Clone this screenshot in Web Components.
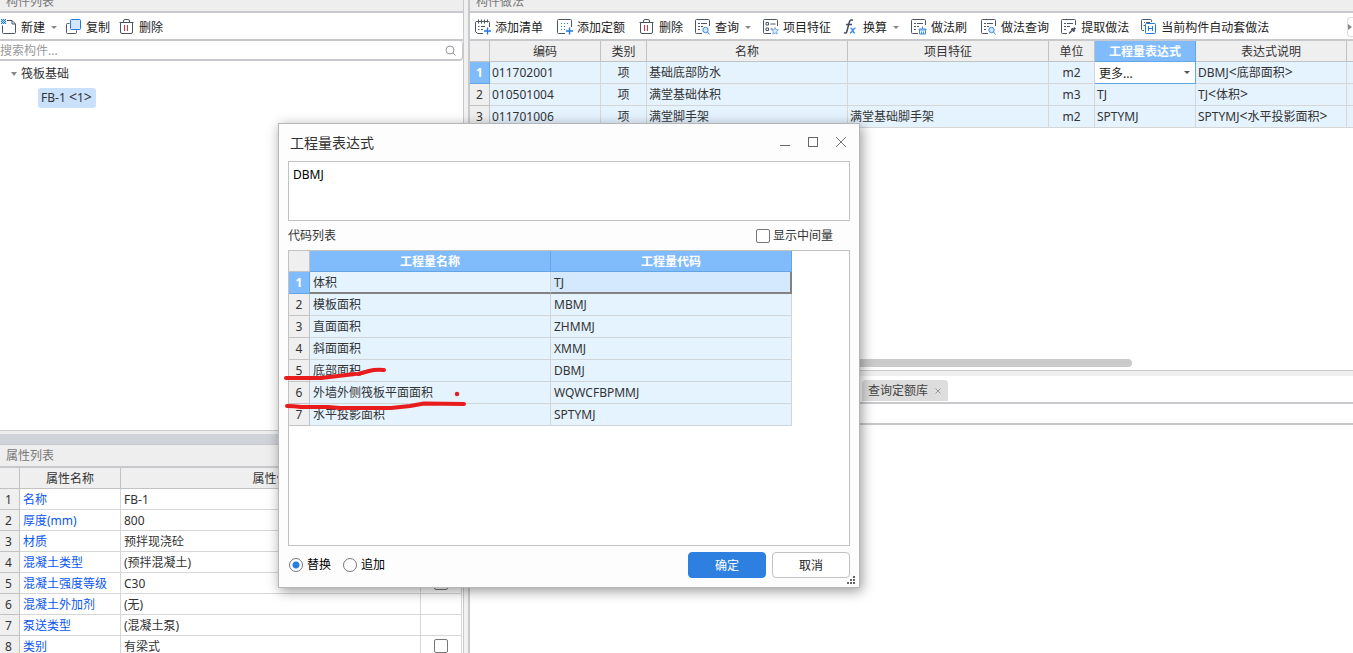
<!DOCTYPE html>
<html lang="zh-CN">
<head>
<meta charset="utf-8">
<title>构件做法</title>
<style>
  html, body { height: 100%; }
  body {
    margin: 0; overflow: hidden; background: #fff; color: #333;
    font: 12px/16px "Noto Sans", "Noto Sans CJK SC", sans-serif;
    --line: #c8c9cc; --grid: #d6d6d6; --bar: #efefef; --blue: #80bbfb; --blue-line: #64a5e8; --cell: #e5f3ff;
  }
</style>
</head>
<body>
<app-shell></app-shell>
<script>
const G = '#4c5564', B = '#1f7ae0';
const ICONS = {
  'new': `<path d="M6 1.500h5l3.500 3.500v8.500a1 1 0 0 1-1 1h-11a1 1 0 0 1-1-1V6.500M11 1.500V5h3.500" stroke="${G}"/><path d="M0 0h5v5H0z" fill="#b9d7f8"/><path d="M0 0h1v1H0zM2 0h1v1H2zM4 0h1v1H4zM1 1h1v1H1zM3 1h1v1H3zM0 2h1v1H0zM2 2h1v1H2zM4 2h1v1H4zM1 3h1v1H1zM3 3h1v1H3zM0 4h1v1H0zM2 4h1v1H2zM4 4h1v1H4z" fill="${B}"/>`,
  copy: `<path d="M3.500 4.500h-2a1 1 0 0 0-1 1v8a1 1 0 0 0 1 1h8a1 1 0 0 0 1-1v-2" stroke="${G}"/><rect x="4.500" y=".5" width="10" height="10" rx="1" fill="#d4e6fb" stroke="${B}"/>`,
  del: `<path d="M.5 3.500h14M4.500 3V2a1.500 1.500 0 0 1 1.500-1.500h3A1.500 1.500 0 0 1 10.500 2v1M1.500 4v9a1.500 1.500 0 0 0 1.500 1.500h9a1.500 1.500 0 0 0 1.500-1.500V4" stroke="${G}"/><path d="M5.500 6v6M8.500 6v6" stroke="#e0343c"/>`,
  addList: `<path d="M8 14.500H2.500L.5 12.500v-9a1 1 0 0 1 1-1h12a1 1 0 0 1 1 1V8M3.500.5v4M6.500.5v4M9.500.5v4M12.500.5v3M3 7.500h1.500M6 7.500h4M3 10.500h1.500M6 10.500h2" stroke="${G}"/><path d="M12.500 8.500v7M9 12h7" stroke="${B}" stroke-width="1.400"/>`,
  addQuota: `<path d="M8 14.500H1.500a1 1 0 0 1-1-1v-12a1 1 0 0 1 1-1h12a1 1 0 0 1 1 1V8" stroke="${G}"/><path d="M4 4.500h9M4 7.500h6M4 10.500h5" stroke="${B}" stroke-dasharray="1 2"/><path d="M12.500 8.500v7M9 12h7" stroke="${B}" stroke-width="1.400"/>`,
  query: `<path d="M7 14.500H1.500a1 1 0 0 1-1-1v-12a1 1 0 0 1 1-1h12a1 1 0 0 1 1 1V7M3 4.500h2M6 4.500h6M3 7.500h2M6 7.500h2M3 10.500h2" stroke="${G}"/><circle cx="10.500" cy="11" r="2.700" fill="#d4e6fb" stroke="#3b8de8"/><path d="M12.500 13l2 2.500" stroke="#3b8de8"/>`,
  feature: `<path d="M8 14.500H1.500a1 1 0 0 1-1-1v-12a1 1 0 0 1 1-1h12a1 1 0 0 1 1 1V7M3 3.500h2.500v2.500H3zM3 9h2.500v2.500H3zM7.500 5h5M7.500 10h2" stroke="${G}"/><path d="M12 8.500l1 2.200 2.500.2-1.800 1.700.5 2.500-2.200-1.200-2.200 1.200.5-2.500-1.800-1.700 2.500-.2z" fill="#dbeafc" stroke="#5b9dec" stroke-width=".8"/>`,
  fx: `<path d="M1 13.500c1.500 1.200 2.500.6 3-1.500L6.200 3.500C6.800 1.300 7.800.4 10 1.200M3 5.500h6" stroke="#444c5c" stroke-width="1.500"/><path d="M7.500 9.500c2-1 2 4.500 4.500 4.500M12.500 9c-2 0-3.500 5-5.500 5" stroke="#3b8de8" stroke-width="1.500"/>`,
  brush: `<path d="M7 14.500H1.500a1 1 0 0 1-1-1v-12a1 1 0 0 1 1-1h12a1 1 0 0 1 1 1V6M3 4.500h2M6 4.500h6M3 7.500h2M6 7.500h2M3 10.500h2" stroke="${G}"/><path d="M11.500 7.500v2.500M8 11h7v-1H8zM8.500 11v4h6v-4M10.500 12.500V15M12.500 12.500V15" stroke="#3b8de8"/>`,
  extract: `<path d="M6 14.500H1.500a1 1 0 0 1-1-1v-12a1 1 0 0 1 1-1h12a1 1 0 0 1 1 1V6M3 4.500h2M6 4.500h6M3 7.500h2M6 7.500h3M3 10.500h2" stroke="${G}"/><path d="M8 14.500l4-4" stroke="${G}" stroke-width="1.400"/><path d="M10.500 9.500l3 3M12 11l2.200-2.200" stroke="${G}" stroke-width="2.200"/>`,
  auto: `<path d="M3 11.500H1.500a1 1 0 0 1-1-1v-9a1 1 0 0 1 1-1h8a1 1 0 0 1 1 1V3M3 3.500h1M5 3.500h4M2.500 6.500h1.500" stroke="${G}"/><rect x="4.500" y="4.500" width="10" height="10" rx="1" fill="#fff" stroke="${B}"/><path d="M7.500 7v5M11.500 7v5M7.500 9.500h4" stroke="${B}"/>`,
  search: `<circle cx="7" cy="7" r="4" stroke="#999"/><path d="M10 10l2.500 2.500" stroke="#999"/>`,
  min: `<path d="M3 11.500h10" stroke="#666"/>`,
  max: `<rect x="3.500" y="3.500" width="9" height="9" stroke="#666"/>`,
  close: `<path d="M3 3l10 10M13 3L3 13" stroke="#777"/>`,
};
const svg = name => `<svg width="16" height="16" viewBox="0 0 16 16" fill="none" aria-hidden="true">${ICONS[name]}</svg>`;
const angled = s => s.replace(/[<>]/g, c => `<b class="ang">${c === '<' ? '&lt;' : '&gt;'}</b>`);

/* Shared base: each element renders its own shadow tree. */
class Base extends HTMLElement {
  connectedCallback() {
    if (this.shadowRoot) return;
    this.attachShadow({ mode: 'open' }).innerHTML = `<style>*{box-sizing:border-box}.ang{font-size:14px;line-height:1px;font-weight:400}${this.css()}</style>${this.html()}`;
  }
}

customElements.define('tool-button', class extends Base {
  css() { return `
    :host { display: block; flex: none; }
    button { display: flex; align-items: center; gap: 4px; height: 24px; padding: 0; border: 0; background: none; font: inherit; color: #222; white-space: nowrap; }
    span { padding-top: 2px; }
    svg { display: block; overflow: visible; }
    i { width: 0; margin-left: 2px; border: 3px solid transparent; border-top-color: #888; border-bottom: 0; }`; }
  html() { return `<button type="button">${svg(this.getAttribute('icon'))}<span><slot></slot></span>${this.hasAttribute('menu') ? '<i></i>' : ''}</button>`; }
});

customElements.define('panel-title', class extends Base {
  css() { return `
    :host { display: flex; flex: none; align-items: center; height: 23px; padding: 0 6px; background: #eee; color: #777; border-bottom: 2px solid var(--line); box-sizing: border-box; }
    :host([cut]) { height: 13px; align-items: flex-end; padding-bottom: 1px; overflow: hidden; }`; }
  html() { return `<slot></slot>`; }
});

customElements.define('component-panel', class extends Base {
  css() { return `
    :host { display: flex; flex-direction: column; flex: 1; min-height: 0; border-right: 1px solid var(--line); border-bottom: 1px solid var(--line); background: #fff; }
    .tools { display: flex; align-items: center; gap: 9px; height: 28px; padding: 2px 1px 0; border-bottom: 2px solid var(--line); }
    .search { display: flex; align-items: center; height: 20px; padding: 2px 3px 0 0; border: solid var(--line); border-width: 0 1px 2px 0; border-radius: 0 4px 4px 0; }
    input { flex: 1; min-width: 0; border: 0; padding: 0; outline: 0; font: inherit; background: none; }
    input::placeholder { color: #999; opacity: 1; }
    ul { list-style: none; margin: 0; padding: 0; }
    .tree { padding: 3px 11px; }
    .node { display: flex; align-items: center; gap: 4px; height: 20px; }
    .node i { border: 3px solid transparent; border-top: 4px solid #888; border-bottom: 0; }
    .tree ul { padding: 4px 27px; }
    .leaf { display: inline-block; padding: 2px 4px 2px 3px; border-radius: 3px; background: #cae1fb; }`; }
  html() { return `
    <panel-title cut>构件列表</panel-title>
    <div class="tools"><tool-button icon="new" menu>新建</tool-button><tool-button icon="copy">复制</tool-button><tool-button icon="del">删除</tool-button></div>
    <div class="search"><input type="text" aria-label="搜索构件" placeholder="搜索构件...">${svg('search')}</div>
    <ul class="tree"><li><div class="node"><i></i>筏板基础</div><ul><li><span class="leaf">${angled('FB-1 <1>')}</span></li></ul></li></ul>`; }
});

customElements.define('property-panel', class extends Base {
  css() { return `
    :host { display: block; flex: none; height: 222px; overflow: hidden; background: #fff; border-right: 1px solid var(--line); }
    .band { height: 14px; border: solid var(--line); border-width: 3px 0 1px; border-top-color: #eee; background: #d0d2d9; }
    .wrap { padding-right: 1px; }
    table { width: 100%; table-layout: fixed; border-collapse: separate; border-spacing: 0; }
    th, td { height: 21px; padding: 2px 2px 0; line-height: 18px; border: solid var(--grid); border-width: 0 1px 1px 0; font-weight: 400; text-align: left; white-space: nowrap; }
    td { padding-left: 3px; }
    thead th { background: var(--bar); border-color: #c2c2c2; text-align: center; }
    tbody th { background: var(--bar); border-color: #c2c2c2; text-align: center; padding: 2px 2px 0 0; }
    a { color: #0b57f0; text-decoration: none; }
    td.c { text-align: center; padding: 0; }
    input { appearance: none; display: block; width: 14px; height: 14px; margin: 0 auto; border: 1px solid #777; border-radius: 2px; background: #fff; }`; }
  html() {
    const rows = [['名称', 'FB-1'], ['厚度(mm)', '800'], ['材质', '预拌现浇砼'], ['混凝土类型', '(预拌混凝土)'], ['混凝土强度等级', 'C30', 1], ['混凝土外加剂', '(无)'], ['泵送类型', '(混凝土泵)'], ['类别', '有梁式', 1]];
    return `<div class="band"></div><panel-title>属性列表</panel-title>
    <div class="wrap"><table><colgroup><col style="width:20px"><col style="width:101px"><col><col style="width:41px"></colgroup>
    <thead><tr><th></th><th>属性名称</th><th>属性值</th><th></th></tr></thead><tbody>
    ${rows.map((r, i) => `<tr><th>${i + 1}</th><td><a href="#p${i + 1}">${r[0]}</a></td><td>${r[1]}</td><td class="c">${r[2] ? `<input type="checkbox" aria-label="${r[0]}">` : ''}</td></tr>`).join('')}
    </tbody></table></div>`;
  }
});

customElements.define('practice-panel', class extends Base {
  css() { return `
    :host { display: flex; flex-direction: column; flex: 1; min-height: 0; background: #fff; }
    .tools { display: flex; align-items: center; gap: 12px; height: 28px; padding: 2px 0 0 5px; border-bottom: 2px solid var(--line); overflow: hidden; }
    .wide { margin-left: 2px; }
    .more { flex: none; width: 6px; height: 20px; margin-left: auto; padding: 0; border: 1px solid #ddd; border-right: 0; border-radius: 4px 0 0 4px; background: #fff; display: flex; align-items: center; }
    .more i { border: 3px solid transparent; border-left: 4px solid #888; border-right: 0; }
    table { width: 100%; table-layout: fixed; border-collapse: separate; border-spacing: 0; }
    th, td { height: 22px; padding: 0 2px; line-height: 21px; font-weight: 400; text-align: left; white-space: nowrap; border: solid var(--grid); border-width: 0 1px 1px 0; overflow: hidden; }
    td { background: var(--cell); }
    th:last-child, td:last-child { border-right: 0; }
    tbody th { background: var(--bar); border-color: #c2c2c2; text-align: center; padding: 0; }
    thead th { height: 21px; padding-top: 2px; line-height: 18px; background: var(--bar); border-color: #c2c2c2; text-align: center; }
    tr th.on { background: var(--blue); border-color: var(--blue-line); color: #fff; font-weight: 700; }
    .c { text-align: center; }
    td.pick { padding: 0; background: #fff; border-color: var(--blue-line); }
    .drop { display: flex; align-items: center; padding-right: 5px; }
    select { appearance: none; flex: 1; min-width: 0; height: 20px; border: 0; padding: 0 4px; outline: 0; background: none; font: inherit; color: #222; }
    .drop i { border: 3px solid transparent; border-top-color: #555; border-bottom: 0; }
    .scroll { margin-top: auto; padding-bottom: 3px; }
    .thumb { width: 75%; height: 8px; border-radius: 4px; background: #cacaca; }`; }
  html() {
    const rows = [['011702001', '基础底部防水', '', 'm2', '', 'DBMJ<底部面积>'], ['010501004', '满堂基础体积', '', 'm3', 'TJ', 'TJ<体积>'], ['011701006', '满堂脚手架', '满堂基础脚手架', 'm2', 'SPTYMJ', 'SPTYMJ<水平投影面积>']];
    const pick = `<td class="pick"><div class="drop"><select aria-label="工程量表达式"><option>更多...</option></select><i></i></div></td>`;
    return `<panel-title cut>构件做法</panel-title>
    <div class="tools"><tool-button icon="addList">添加清单</tool-button><tool-button class="wide" icon="addQuota">添加定额</tool-button><tool-button class="wide" icon="del">删除</tool-button><tool-button icon="query" menu>查询</tool-button><tool-button icon="feature">项目特征</tool-button><tool-button icon="fx" menu>换算</tool-button><tool-button icon="brush">做法刷</tool-button><tool-button class="wide" icon="query">做法查询</tool-button><tool-button icon="extract">提取做法</tool-button><tool-button icon="auto">当前构件自动套做法</tool-button><button class="more" type="button" aria-label="更多"><i></i></button></div>
    <table><colgroup>${[20, 111, 46, 201, 201, 46, 101, 151].map(w => `<col style="width:${w}px">`).join('')}<col></colgroup>
    <thead><tr><th></th><th>编码</th><th>类别</th><th>名称</th><th>项目特征</th><th>单位</th><th class="on">工程量表达式</th><th>表达式说明</th><th></th></tr></thead><tbody>
    ${rows.map((r, i) => `<tr><th class="${i ? '' : 'on'}">${i + 1}</th><td>${r[0]}</td><td class="c">项</td><td>${r[1]}</td><td>${r[2]}</td><td class="c">${r[3]}</td>${i ? `<td>${r[4]}</td>` : pick}<td>${angled(r[5])}</td><td></td></tr>`).join('')}
    </tbody></table>
    <div class="scroll"><div class="thumb"></div></div>`;
  }
});

customElements.define('query-panel', class extends Base {
  css() { return `
    :host { display: block; flex: none; height: 283px; border-top: 1px solid var(--line); background: #fff; }
    .tabs { display: flex; align-items: flex-end; height: 31px; padding: 0 0 1px 392px; border-top: 5px solid #efefef; }
    .tab { display: flex; align-items: center; gap: 6px; height: 21px; padding: 0 6px; border: 0; border-radius: 4px 4px 0 0; background: #ddd; color: #444; font: inherit; }
    .tab svg { display: block; }
    .strip { height: 23px; border: solid var(--line); border-width: 2px 0; }`; }
  html() { return `<div class="tabs"><button class="tab" type="button">查询定额库<svg width="8" height="8" viewBox="0 0 8 8" fill="none"><path d="M1.500 1.500l5 5M6.500 1.500l-5 5" stroke="#999"/></svg></button></div><div class="strip"></div>`; }
});

customElements.define('code-table', class extends Base {
  css() { return `
    :host { display: block; flex: 1; min-height: 0; background: #fff; border: 1px solid #c2c2c2; }
    table { table-layout: fixed; width: 503px; border-collapse: separate; border-spacing: 0; }
    th, td { height: 22px; padding: 0 3px; line-height: 21px; font-weight: 400; text-align: left; white-space: nowrap; border: solid #d2d5d8; border-width: 0 1px 1px 0; }
    td { background: var(--cell); }
    th:first-child { background: var(--bar); border-color: #c2c2c2; text-align: center; padding: 0; }
    thead th + th { background: var(--blue); border-color: var(--blue-line); color: #fff; font-weight: 700; text-align: center; padding-top: 2px; line-height: 18px; }
    thead th { height: 21px; line-height: 20px; }
    tbody tr:first-child th { background: var(--blue); border-color: var(--blue-line); color: #fff; font-weight: 700; }
    tbody tr:first-child td { border-bottom: 2px solid #828282; padding-top: 2px; line-height: 18px; }
    tbody tr:first-child td:last-child { background: #d5e9fe; border-right: 2px solid #828282; }`; }
  html() {
    const rows = [['体积', 'TJ'], ['模板面积', 'MBMJ'], ['直面面积', 'ZHMMJ'], ['斜面面积', 'XMMJ'], ['底部面积', 'DBMJ'], ['外墙外侧筏板平面面积', 'WQWCFBPMMJ'], ['水平投影面积', 'SPTYMJ']];
    return `<table><colgroup><col style="width:21px"><col style="width:241px"><col style="width:241px"></colgroup>
    <thead><tr><th></th><th>工程量名称</th><th>工程量代码</th></tr></thead><tbody>
    ${rows.map((r, i) => `<tr><th>${i + 1}</th><td>${r[0]}</td><td>${r[1]}</td></tr>`).join('')}</tbody></table>`;
  }
});

customElements.define('expression-dialog', class extends Base {
  css() { return `
    :host { display: flex; flex-direction: column; position: absolute; left: 278px; top: 123px; width: 582px; height: 465px; padding: 0 9px 9px; box-sizing: border-box; border: 1px solid #b4b6b8; background: #fdfdfd; box-shadow: 2px 3px 12px rgba(0,0,0,.4); }
    header { display: flex; align-items: center; height: 37px; padding-left: 2px; }
    h2 { flex: 1; margin: 0; font-size: 14px; line-height: 20px; font-weight: 400; }
    header button { width: 28px; height: 24px; padding: 0 0 2px; border: 0; background: none; display: grid; place-items: center; }
    header button:last-child { margin-right: -5px; }
    textarea { display: block; flex: none; width: 100%; height: 60px; resize: none; padding: 5px 4px; border: 1px solid #c2c2c2; border-radius: 0; outline: 0; background: #fff; font: inherit; color: #000; }
    .row { display: flex; align-items: center; justify-content: space-between; height: 29px; padding-right: 17px; }
    label { display: flex; align-items: center; gap: 3px; }
    input { appearance: none; width: 14px; height: 14px; margin: 0; border: 1px solid #777; border-radius: 2px; background: #fff; }
    input[type=radio] { width: 14px; height: 14px; border-radius: 50%; }
    input[type=radio]:checked { background: radial-gradient(circle, #2a7de1 3px, #fff 4px); }
    footer { display: flex; align-items: center; gap: 12px; height: 26px; margin-top: 6px; padding-left: 1px; color: #000; }
    footer label { gap: 4px; }
    .acts { display: flex; gap: 6px; margin-left: auto; }
    .acts button { width: 78px; height: 26px; padding: 1px 0 0; border: 1px solid #c2c2c2; border-radius: 4px; background: #fff; color: #222; font: inherit; }
    .acts button.ok { background: #2d7fe0; border-color: #2d7fe0; color: #fff; }
    .grip { position: absolute; right: 3px; bottom: 2px; }
    .marks { position: absolute; left: 0; top: 237px; pointer-events: none; }`; }
  html() { return `
    <header><h2>工程量表达式</h2><button type="button" aria-label="最小化">${svg('min')}</button><button type="button" aria-label="最大化">${svg('max')}</button><button type="button" aria-label="关闭">${svg('close')}</button></header>
    <textarea aria-label="表达式">DBMJ</textarea>
    <div class="row"><span>代码列表</span><label><input type="checkbox">显示中间量</label></div>
    <code-table></code-table>
    <footer><label><input type="radio" name="mode" checked>替换</label><label><input type="radio" name="mode">追加</label>
    <div class="acts"><button class="ok" type="button">确定</button><button type="button">取消</button></div></footer>
    <svg class="grip" width="9" height="9" viewBox="0 0 9 9" fill="#666" aria-hidden="true"><path d="M6 0h2v2h-2zM3 3h2v2h-2zM6 3h2v2h-2zM0 6h2v2h-2zM3 6h2v2h-2zM6 6h2v2h-2z"/></svg>
    <svg class="marks" width="200" height="60" viewBox="279 361 200 60" fill="none" stroke="#e81c1c" stroke-width="4" stroke-linecap="round" stroke-linejoin="round" aria-hidden="true"><path d="M286 378L321 378L338 376L355 374M358 374L369 371Q376 369 384 370"/><path d="M287 406Q294 406 301 407L328 407L340 408L391 408L410 406L424 403.500L464 404"/><circle cx="457" cy="394" r="2.200" fill="#e81c1c" stroke="none"/></svg>`; }
});

customElements.define('app-shell', class extends Base {
  css() { return `
    :host { display: grid; grid-template-columns: 464px 4px minmax(0, 1fr); height: 100vh; position: relative; background: #f1f1f1; overflow: hidden; }
    section { display: flex; flex-direction: column; min-width: 0; min-height: 0; }
    .right { grid-column: 3; border-left: 2px solid var(--line); }`; }
  html() { return `<section><component-panel></component-panel><property-panel></property-panel></section>
    <section class="right"><practice-panel></practice-panel><query-panel></query-panel></section>
    <expression-dialog></expression-dialog>`; }
});
</script>
</body>
</html>
